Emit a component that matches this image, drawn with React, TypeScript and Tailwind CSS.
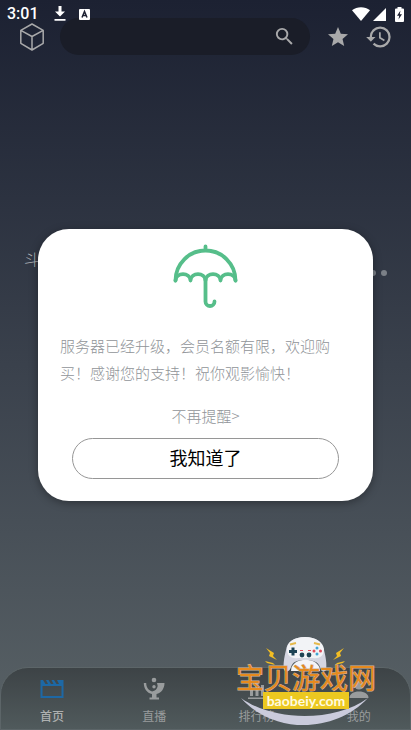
import { MdHistory, MdSearch, MdStar } from "react-icons/md";

function StatusBar() {
  return (
    <div className="absolute inset-x-0 top-0 z-30 flex h-7 items-center justify-between px-[7px] text-white">
      <div className="flex items-center">
        <span className="w-[47px] font-[Roboto,sans-serif] text-[16px] font-medium leading-5">3:01</span>
        <svg className="h-4 w-3" viewBox="0 0 12 16" fill="currentColor" aria-hidden="true">
          <path d="M4.500 0h3v5.500H11L6 10.500 1 5.500h3.500zM.5 13h11v1.800H.5z" />
        </svg>
        <svg className="ml-[13px] h-[11px] w-[11px]" viewBox="0 0 11 11" aria-hidden="true">
          <rect width="11" height="11" rx="1" fill="#fff" />
          <path d="M3 8.500 5.500 2.500 8 8.500M4 6.500h3" fill="none" stroke="#1d2132" strokeWidth="1.500" />
        </svg>
      </div>
      <div className="flex items-center">
        <svg className="h-[14px] w-[18px]" viewBox="0 0 18 14" fill="currentColor" aria-hidden="true">
          <path d="M0 3.200C5-.8 13-.8 18 3.200L9 14z" />
        </svg>
        <svg className="ml-[3px] h-[13px] w-[13px]" viewBox="0 0 13 13" fill="currentColor" aria-hidden="true">
          <path d="M13 0v13H0z" />
        </svg>
        <svg className="ml-[9px] h-[15px] w-[9px]" viewBox="0 0 9 15" aria-hidden="true">
          <path d="M2.500 0h4v1.500H8q1 0 1 1V14q0 1-1 1H1q-1 0-1-1V2.500q0-1 1-1h1.500z" fill="#fff" />
          <path d="M5.500 3.500 2 8.800h2.200L3.500 12.500 7 7.300H4.800z" fill="#1d2132" />
        </svg>
      </div>
    </div>
  );
}

function Header() {
  return (
    <header className="flex items-center pl-5 pr-[18px] pt-[18px] text-[#a9a9aa]">
      <button type="button" aria-label="分类">
        <svg
          className="h-7 w-6"
          viewBox="0 0 24 28"
          fill="none"
          stroke="currentColor"
          strokeWidth="1.500"
          strokeLinejoin="round"
        >
          <path d="M12 1 23.200 7.300v13L12 27 .8 20.300v-13zM.8 7.300 12 13.500l11.200-6.200M12 13.500V27" />
        </svg>
      </button>
      <form className="ml-4 flex h-[37px] flex-1 items-center rounded-full bg-[#1a1d28] pr-[14px]">
        <input
          type="text"
          aria-label="搜索"
          className="min-w-0 flex-1 bg-transparent pl-4 text-sm outline-none"
        />
        <button type="submit" aria-label="开始搜索">
          <MdSearch size={23} />
        </button>
      </form>
      <button type="button" aria-label="收藏" className="ml-4">
        <MdStar size={24} />
      </button>
      <button type="button" aria-label="历史" className="ml-[15px]">
        <MdHistory size={28} />
      </button>
    </header>
  );
}

function Umbrella() {
  return (
    <svg
      className="mx-auto h-[66px] w-[67px]"
      viewBox="0 0 67 66"
      fill="none"
      stroke="#56be8a"
      strokeWidth="3.800"
      strokeLinecap="round"
      strokeLinejoin="round"
      aria-hidden="true"
    >
      <path d="M33.500 3.500V7.500M3.500 37.500A30 30 0 0 1 63.500 37.500" />
      <path d="M3.500 37.500C4 29 18 29 18.500 37.500 19 29 33 29 33.500 37.500 34 29 48 29 48.500 37.500 49 29 63 29 63.500 37.500" />
      <path d="M33.500 36v22.500a4.500 4.500 0 0 0 9 0" />
    </svg>
  );
}

function NoticeDialog() {
  return (
    <div className="absolute inset-0 z-20 flex items-center px-[38px]">
      <section
        role="dialog"
        aria-label="公告"
        className="flex w-full flex-col rounded-[31px] bg-white px-[22px] pb-[22px] pt-[14px] shadow-[0_2px_8px_rgba(0,0,0,0.35)]"
      >
        <Umbrella />
        <p className="mt-[23px] text-[15px] font-light leading-[27px] text-[#909498]">
          服务器已经升级，会员名额有限，欢迎购买！感谢您的支持！祝你观影愉快！
        </p>
        <button type="button" className="mx-auto mt-4 text-[15px] font-light leading-[27px] text-[#909498]">
          不再提醒&gt;
        </button>
        <button
          type="button"
          className="mx-3 mt-[9px] h-[41px] rounded-full border border-[#969696] pb-[2px] text-[18px] text-black"
        >
          我知道了
        </button>
      </section>
    </div>
  );
}

function MovieIcon() {
  return (
    <svg className="h-5 w-6" viewBox="0 0 24 20" aria-hidden="true">
      <path
        d="M.5 1 3 1 5.500 5H8L6 1h2.500L11 5h2.500L11.500 1H14l2.500 4H19L17 1h6.500v18H.5zM2.500 7v10h19V7z"
        fill="#1d68a5"
        fillRule="evenodd"
      />
    </svg>
  );
}

function LiveIcon() {
  return (
    <svg className="h-6 w-6" viewBox="0 0 24 24" fill="currentColor" aria-hidden="true">
      <circle cx="12" cy="3" r="2.300" />
      <path d="M1.800 6h2.400c0 4 2.300 7.500 6 8.500 3-.5 5-2.500 5.500-5.500L15 6H22.500c0 6-3.500 10-8 11v3.500H17V22.500H7.500v-2H10V17C5 16 1.800 11.500 1.800 6z" />
      <circle cx="12" cy="9.800" r="1.700" />
    </svg>
  );
}

function RankIcon() {
  return (
    <svg className="h-6 w-6" viewBox="0 0 24 24" fill="currentColor" aria-hidden="true">
      <path d="M5 11h3v8H5zM10.500 4h3v15h-3zM16 8h3v11h-3zM3 20.500h18V22H3z" />
    </svg>
  );
}

function MineIcon() {
  return (
    <svg className="h-6 w-6" viewBox="0 0 24 24" fill="currentColor" aria-hidden="true">
      <circle cx="12" cy="8" r="4.500" />
      <path d="M2.500 21c0-4 4-6.500 9.500-6.500s9.500 2.500 9.500 6.500z" />
    </svg>
  );
}

const tabs = [
  { label: "首页", icon: <MovieIcon />, active: true },
  { label: "直播", icon: <LiveIcon /> },
  { label: "排行榜", icon: <RankIcon /> },
  { label: "我的", icon: <MineIcon /> },
];

function BottomNav() {
  return (
    <nav className="grid grid-cols-4 rounded-t-[28px] border border-[#5c6568] bg-linear-to-b from-[#3d4346] to-[#505a5c] pb-1 pt-[9px] text-[#999c9d]">
      {tabs.map((tab) => (
        <a key={tab.label} href="#" className="flex flex-col items-center">
          <span className="flex h-6 items-center">{tab.icon}</span>
          <span
            className={
              tab.active
                ? "mt-[6px] text-[12px] font-medium leading-[18px] text-[#aeb0b0]"
                : "mt-[6px] text-[12px] leading-[18px]"
            }
          >
            {tab.label}
          </span>
        </a>
      ))}
    </nav>
  );
}

function Watermark() {
  return (
    <div className="pointer-events-none absolute bottom-1 right-[35px] z-10 flex h-[90px] w-[140px] flex-col items-center pt-[27px]">
      <svg className="absolute inset-0" viewBox="0 0 140 90" aria-hidden="true">
        <path d="M5 62C38 86 99 86 132 62 98 98 37 98 5 62z" fill="#cacbdc" />
        <path
          d="M69 1C58 1 51 6 50 14 48 22 47 29 48 34 51 37 54 35 55 31 57 26 60 24 69 24S82 26 84 31C85 35 88 37 90 34 91 29 90 22 88 14 86 6 80 1 69 1z"
          fill="#d5d6e2"
        />
        <path d="M69 1C58 1 51 6 51 13 51 21 57 23 62 22H77C82 23 88 21 88 13 87 6 80 1 69 1z" fill="#f2f3f6" />
        <path d="M55 35C55 20 84 20 84 35z" fill="#f4f4f8" />
        <path d="M54 8.500l6-1.500M84 8.500 78 7" stroke="#e5b94b" strokeWidth="2" />
        <path d="M57 11.500v8M53 15.500h8" stroke="#1d4254" strokeWidth="3" />
        <circle cx="66" cy="19" r="2.400" fill="#1d4254" />
        <circle cx="73" cy="19" r="2.400" fill="#1d4254" />
        <path d="M64 14.500h3M72 14.500h3" stroke="#e04d5c" strokeWidth="1.200" />
        <circle cx="81" cy="12" r="1.500" fill="#42a5d4" />
        <circle cx="81" cy="18" r="1.500" fill="#42a5d4" />
        <circle cx="78" cy="15" r="1.500" fill="#e04d5c" />
        <circle cx="84.500" cy="15" r="1.500" fill="#e04d5c" />
        <path
          d="M30 12 38 17 37 20 41 24 33 20 34 17zM29 25l8 2 2 2-8-2zM108 12 100 17 101 20 97 24 105 20 104 17zM109 25l-8 2-2 2 8-2z"
          fill="#f2bd23"
        />
      </svg>
      <span className="relative whitespace-nowrap text-[28px] leading-7 text-[#e68a1e] [paint-order:stroke_fill] [-webkit-text-stroke:1px_#cdb49e]">
        宝贝游戏网
      </span>
      <span className="relative mt-px bg-[#ecc820] px-1 font-[Lato,sans-serif] text-[14px] font-bold leading-[17px] text-[#fffbe0]">
        baobeiy.com
      </span>
    </div>
  );
}

export default function App() {
  return (
    <div className="relative flex min-h-screen flex-col bg-linear-to-b from-[#1c2132] via-[#3a414c] to-[#596266] font-['Noto_Sans_CJK_SC',sans-serif]">
      <StatusBar />
      <Header />
      <main className="flex flex-1 items-start justify-between px-6 pt-[192px]">
        <h2 className="text-[16px] font-light leading-6 text-[#b0b3b8]">斗</h2>
        <div className="mt-[23px] flex gap-[5px]">
          <i className="h-[6px] w-[6px] rounded-full bg-[#7b8087]" />
          <i className="h-[6px] w-[6px] rounded-full bg-[#7b8087]" />
        </div>
      </main>
      <BottomNav />
      <NoticeDialog />
      <Watermark />
    </div>
  );
}
